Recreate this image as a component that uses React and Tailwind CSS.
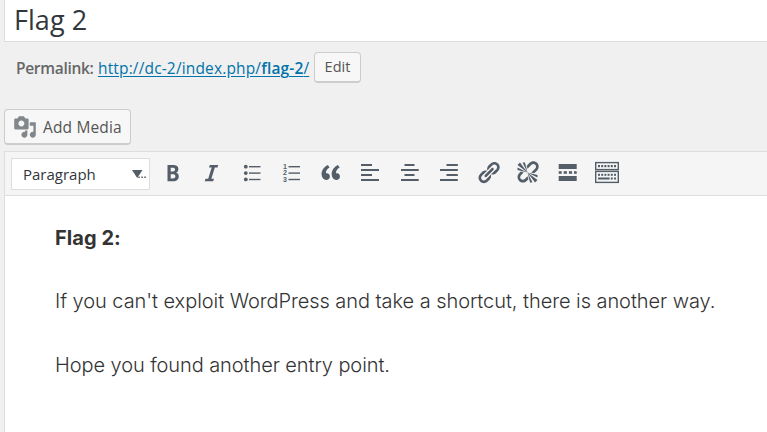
const UI = "font-['Open_Sans','Noto_Sans',sans-serif]";

function Glyph({ d }) {
  return (
    <svg viewBox="0 0 20 20" className="h-[25px] w-[25px] shrink-0 fill-current">
      <path d={d} />
    </svg>
  );
}

function Bars({ rects, children }) {
  return (
    <svg viewBox="-1 -1 25 25" className="h-[25px] w-[25px] shrink-0 fill-current">
      {rects.map(([x, y, w, h], i) => (
        <rect key={i} x={x} y={y} width={w} height={h} />
      ))}
      {children}
    </svg>
  );
}

const BOLD =
  'M6 4v13h4.54c1.37 0 2.46-.33 3.26-1 .8-.66 1.2-1.58 1.2-2.77 0-.84-.17-1.51-.51-2.01s-.9-.85-1.67-1.03v-.09c.57-.1 1.02-.4 1.36-.9s.51-1.13.51-1.91c0-1.14-.39-1.98-1.17-2.5C12.75 4.26 11.5 4 9.78 4H6zm2.57 5.15V6.26h1.36c.73 0 1.27.11 1.61.32.34.22.51.58.51 1.07 0 .54-.16.92-.47 1.15s-.82.35-1.51.35h-1.5zm0 2.19h1.6c1.44 0 2.16.53 2.16 1.61 0 .6-.17 1.05-.51 1.34s-.86.43-1.57.43H8.57v-3.38z';
const ITALIC = 'M14.78 6h-2.13l-2.8 9h2.12l-.62 2H4.6l.62-2h2.14l2.8-9H8.03l.62-2h6.75z';
const QUOTE =
  'M9.49 13.22c0-.74-.2-1.38-.61-1.9-.62-.78-1.83-.88-2.53-.72-.29-1.65 1.11-3.75 2.92-4.65L7.88 4c-2.73 1.3-5.42 4.28-4.96 8.05C3.21 14.43 4.59 16 6.54 16c.85 0 1.56-.25 2.12-.75s.83-1.18.83-2.03zm8.05 0c0-.74-.2-1.38-.61-1.9-.63-.78-1.83-.88-2.53-.72-.29-1.65 1.11-3.75 2.92-4.65L15.93 4c-2.73 1.3-5.41 4.28-4.95 8.05.28 2.38 1.66 3.95 3.61 3.95.85 0 1.56-.25 2.12-.75s.83-1.18.83-2.03z';
const LINK =
  'M17.74 2.76c1.68 1.69 1.68 4.41 0 6.1l-1.53 1.52c-1.12 1.12-2.7 1.47-4.14 1.09l2.62-2.61.76-.77.76-.76c.84-.84.84-2.2 0-3.04-.84-.85-2.2-.85-3.04 0l-.77.76-3.38 3.38c-.37-1.44-.02-3.02 1.1-4.14l1.52-1.53c1.69-1.68 4.42-1.68 6.1 0zM8.59 13.43l5.34-5.34c.42-.42.42-1.1 0-1.52-.44-.43-1.13-.39-1.53 0l-5.33 5.34c-.42.42-.42 1.1 0 1.52.44.43 1.13.39 1.52 0zm-.76 2.29l4.14-4.15c.38 1.44.03 3.02-1.09 4.14l-1.52 1.53c-1.69 1.68-4.41 1.68-6.1 0-1.68-1.68-1.68-4.42 0-6.1l1.53-1.52c1.12-1.12 2.7-1.47 4.14-1.1l-4.14 4.15c-.85.84-.85 2.2 0 3.05.84.84 2.2.84 3.04 0z';
const UNLINK =
  'M17.74 2.26c1.68 1.69 1.68 4.41 0 6.1l-1.53 1.52c-.32.33-.69.58-1.08.77L13 10l1.69-1.64.76-.77.76-.76c.84-.84.84-2.2 0-3.04-.84-.85-2.2-.85-3.04 0l-.77.76-.76.76L10 7l-.65-2.14c.19-.38.44-.75.77-1.07l1.52-1.53c1.69-1.68 4.42-1.68 6.1 0zM2 4l8 6-6-8zm4-2l4 8-2-8H6zM2 6l8 4-8-2V6zm7.36 7.69L10 13l.74 2.35-1.38 1.39c-1.69 1.68-4.41 1.68-6.1 0-1.68-1.68-1.68-4.42 0-6.1l1.39-1.38L7 10l-.69.64-1.52 1.53c-.85.84-.85 2.2 0 3.04.84.85 2.2.85 3.04 0zM18 16l-8-6 6 8zm-4 2l-4-8 2 8h2zm4-4l-8-4 8 2v2z';
const MEDIA =
  'M13 11V4c0-.55-.45-1-1-1h-1.67L9 1H5L3.67 3H2c-.55 0-1 .45-1 1v7c0 .55.45 1 1 1h10c.55 0 1-.45 1-1zM7 4.5c1.38 0 2.5 1.12 2.5 2.5S8.38 9.5 7 9.5 4.5 8.38 4.5 7 5.62 4.5 7 4.5zM14 6h5v10.5c0 1.38-1.12 2.5-2.5 2.5S14 17.88 14 16.5s1.12-2.5 2.5-2.5c.17 0 .34.02.5.05V9h-3V6zm-4 8.05V13h2v3.5c0 1.38-1.12 2.5-2.5 2.5S7 17.88 7 16.5 8.12 14 9.5 14c.17 0 .34.02.5.05z';

const keys = [3, 6.2, 9.4, 12.6, 15.8, 19].map((x) => [x, 4, 2, 2.2]);
const keys2 = [3, 6.2, 9.4, 12.6, 15.8, 19].map((x) => [x, 12.8, 2, 2]);

const tools = [
  ['Bold', <Glyph d={BOLD} />],
  ['Italic', <Glyph d={ITALIC} />],
  [
    'Bulleted list',
    <Bars rects={[[9, 5, 11.5, 1.4], [9, 11.4, 11.5, 1.4], [9, 17.8, 11.5, 1.4]]}>
      <circle cx="5.8" cy="5.7" r="1.9" />
      <circle cx="5.8" cy="12.1" r="1.9" />
      <circle cx="5.8" cy="18.4" r="1.9" />
    </Bars>,
  ],
  [
    'Numbered list',
    <Bars rects={[[9.5, 5, 11.5, 1.4], [9.5, 11.4, 11.5, 1.4], [9.5, 17.8, 11.5, 1.4]]}>
      <g className="font-['Liberation_Sans',sans-serif] text-[7px] font-bold">
        <text x="4" y="7.9">1</text>
        <text x="4" y="14.3">2</text>
        <text x="4" y="20.7">3</text>
      </g>
    </Bars>,
  ],
  ['Blockquote', <Glyph d={QUOTE} />],
  ['Align left', <Bars rects={[[3, 3, 11, 2], [3, 8, 18, 2], [3, 13, 11, 2], [3, 18, 18, 2]]} />],
  ['Align center', <Bars rects={[[6.5, 3, 10, 2], [3, 8, 17.7, 2], [6.5, 13, 10, 2], [3, 18, 17.7, 2]]} />],
  ['Align right', <Bars rects={[[9.5, 3, 11.3, 2], [3, 8, 17.8, 2], [9.5, 13, 11.3, 2], [3, 18, 17.8, 2]]} />],
  ['Insert link', <Glyph d={LINK} />],
  ['Remove link', <Glyph d={UNLINK} />],
  [
    'Read more',
    <Bars
      rects={[
        [2.7, 3, 18, 5],
        [2.7, 10.2, 3, 2.6],
        [7.7, 10.2, 3.2, 2.6],
        [12.9, 10.2, 3.2, 2.6],
        [18, 10.2, 2.7, 2.6],
        [2.7, 15, 18, 5],
      ]}
    />,
  ],
  [
    'Toolbar toggle',
    <Bars rects={[...keys, ...keys2, [3, 16.5, 11.6, 2], [15.8, 16.5, 2, 2], [19, 16.5, 2, 2]]}>
      <g fill="none" stroke="currentColor" strokeWidth="1.4">
        <rect x="0.7" y="1.6" width="22.6" height="7" />
        <rect x="0.7" y="10.4" width="22.6" height="11" />
      </g>
    </Bars>,
  ],
];

export default function App() {
  return (
    <div className={`flex h-[432px] w-[767px] flex-col overflow-hidden bg-[#f0f0f0] pl-1 ${UI}`}>
      <div className="flex h-[42px] shrink-0 items-center border-b border-l border-[#dddddd] bg-white pb-px pl-[9px]">
        <h1 className="text-[27px] leading-[40px] tracking-[0.05px] text-[#32373c]">Flag 2</h1>
      </div>

      <div className="mt-[10px] flex h-[31px] shrink-0 items-center pl-3 text-[15.5px] text-[#666666]">
        <span className="w-[82px] whitespace-nowrap pt-[3px] font-semibold tracking-[-0.3px]">Permalink:</span>
        <a className="w-[211px] whitespace-nowrap pt-[3px] tracking-[0.15px] text-[#0073aa] underline underline-offset-2">
          http://dc-2/index.php/<b className="font-semibold">flag-2</b>/
        </a>
        <button className="ml-[5px] h-[31px] w-[47px] rounded-[4px] border border-b-2 border-[#cccccc] bg-[#f7f7f7] pb-px text-[14.5px] text-[#555555]">
          Edit
        </button>
      </div>

      <button className="mt-[26px] flex h-[36px] w-[127px] shrink-0 items-center rounded-[4px] border border-b-2 border-[#cccccc] bg-[#f7f7f7] pl-[8px] text-[15.5px] text-[#555555]">
        <svg viewBox="0 0 20 20" className="h-6 w-6 shrink-0 fill-[#82878c]">
          <path d={MEDIA} />
        </svg>
        <span className="ml-[6px] whitespace-nowrap pt-[2px] tracking-[0.15px]">Add Media</span>
      </button>

      <div className="mt-[6px] flex h-[45px] shrink-0 items-center border-y border-l border-[#dedede] bg-[#f5f5f5] pl-[6px] text-[#535e68]">
        <div className="flex h-[32px] w-[139px] items-center border border-[#dddddd] bg-white pl-[11px] text-[15px] text-[#32373c]">
          <span className="w-[109px] pt-[2px]">Paragraph</span>
          <svg viewBox="0 0 16 10" className="mt-[2px] h-[10px] w-4 fill-[#555d66]">
            <path d="M0 0h10.5L5.2 8z" />
            <path d="M6.3 6.5h1.5V8H6.3zM9.3 6.5h1.5V8H9.3zM12.3 6.5h1.5V8h-1.5z" />
          </svg>
        </div>
        <div className="mb-[2px] ml-[10px] flex">
          {tools.map(([label, icon], i) => (
            <button
              key={label}
              aria-label={label}
              className={i % 2 ? 'flex h-[25px] w-[40px]' : 'flex h-[25px] w-[39px]'}
            >
              {icon}
            </button>
          ))}
        </div>
      </div>

      <div className="flex-1 border-l border-[#dddddd] bg-white pl-[50px] pt-[26px] font-['Inter',sans-serif] text-[20px] leading-[32px] text-[#333333]">
        <p className="font-bold tracking-[0.05px]">Flag 2:</p>
        <p className="mt-[31px] whitespace-nowrap font-light tracking-[-0.06px]">
          If you can't exploit WordPress and take a shortcut, there is another way.
        </p>
        <p className="mt-8 whitespace-nowrap font-light tracking-[-0.08px]">Hope you found another entry point.</p>
      </div>
    </div>
  );
}
